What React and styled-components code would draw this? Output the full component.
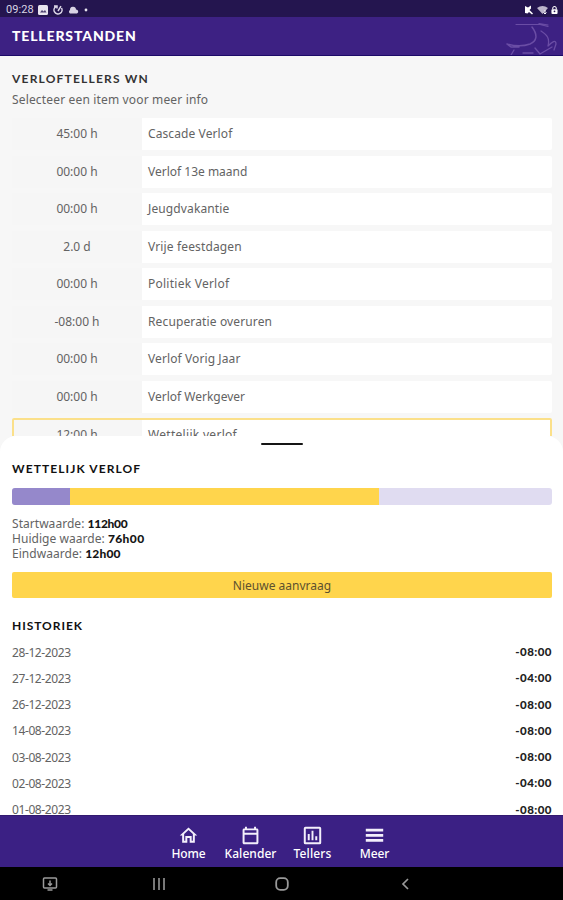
import React from "react";
import styled, { createGlobalStyle } from "styled-components";

const Global = createGlobalStyle`
  * { box-sizing: border-box; }
  body { margin: 0; background: #000; }
`;

const Screen = styled.div`
  width: 563px;
  height: 900px;
  display: flex;
  flex-direction: column;
  overflow: hidden;
  background: #f7f7f7;
  color: #636363;
  font-family: "Noto Sans", sans-serif;
  font-size: 12px;
  white-space: nowrap;
`;

const StatusBar = styled.div`
  flex: none;
  height: 17px;
  padding: 2px 5px 0 6px;
  display: flex;
  align-items: center;
  background: #24154f;
  color: #d9d5e4;
  font: 11px/15px Roboto, sans-serif;
`;

const Clock = styled.span`
  width: 32px;
  letter-spacing: 0.1px;
`;

const StatusIcons = styled.div`
  display: flex;
  align-items: center;
  gap: ${(p) => p.$gap}px;
  margin-left: ${(p) => (p.$end ? "auto" : "0")};
  svg { display: block; }
`;

const Header = styled.header`
  flex: none;
  height: 39px;
  padding-left: 12px;
  display: flex;
  justify-content: space-between;
  align-items: center;
  background: #3d2183;
  border-bottom: 1px solid #1c0a68;
`;

const PageTitle = styled.h1`
  margin: 0;
  color: #fff;
  font: 900 14px/20px Lato, sans-serif;
  letter-spacing: 0.85px;
`;

const Counters = styled.section`
  flex: none;
  height: 380px;
  padding: 14px 11px 0 12px;
  overflow: hidden;
`;

const Heading = styled.h2`
  margin: 0;
  color: ${(p) => (p.$soft ? "#333" : "#111")};
  font: 700 12px/18px Lato, sans-serif;
  letter-spacing: ${(p) => p.$spacing}px;
`;

const Hint = styled.p`
  margin: 3px 0 9px;
  line-height: 18px;
  letter-spacing: ${(p) => p.$spacing}px;
`;

const CounterList = styled.div`
  display: flex;
  flex-direction: column;
  gap: 5.5px;
`;

const CounterRow = styled.div`
  height: 32px;
  display: grid;
  grid-template-columns: 130px 1fr;
  line-height: 32px;
  background: #fff;
  border-radius: 2px;
  outline: ${(p) => (p.$selected ? "2px solid #fbe08a" : "none")};
  outline-offset: -2px;
  padding-top: ${(p) => (p.$selected ? "1px" : "0")};
`;

const Amount = styled.div`
  background: #f6f6f6;
  text-align: center;
  letter-spacing: 0;
`;

const CounterName = styled.div`
  padding-left: 6px;
  letter-spacing: ${(p) => p.$spacing}px;
`;

const Sheet = styled.section`
  flex: none;
  height: 379px;
  padding: 7px 11px 0 12px;
  overflow: hidden;
  background: #fff;
  border-radius: 16px 16px 0 0;
`;

const Handle = styled.div`
  width: 42px;
  height: 2px;
  margin: 0 auto 15px;
  background: #151515;
  border-radius: 1px;
`;

const Meter = styled.div`
  height: 17px;
  margin: 10px 0 11px;
  display: flex;
  overflow: hidden;
  border-radius: 3px;
  background: #e0dcf1;
`;

const MeterPart = styled.div`
  width: ${(p) => p.$size}px;
  background: ${(p) => p.$color};
`;

const Fact = styled.div`
  height: 15px;
  line-height: 15px;
  letter-spacing: ${(p) => p.$spacing}px;
`;

const Strong = styled.b`
  color: #151515;
  font: 900 12px/15px Lato, sans-serif;
  letter-spacing: ${(p) => p.$spacing}px;
`;

const RequestButton = styled.button`
  display: block;
  width: 100%;
  height: 26px;
  margin: 11px 0 19px;
  padding: 1px 0 0;
  border: 0;
  border-radius: 2px;
  background: #ffd54c;
  color: #5d512f;
  font: 12px/25px "Noto Sans", sans-serif;
  letter-spacing: 0;
`;

const History = styled.div`
  margin-top: 4px;
`;

const HistoryRow = styled.div`
  height: 26.25px;
  display: flex;
  justify-content: space-between;
  align-items: center;
  letter-spacing: -0.4px;
`;

const Hours = styled.b`
  color: #222;
  font: 900 11.5px/18px Lato, sans-serif;
  letter-spacing: 0.45px;
`;

const TabBar = styled.nav`
  flex: none;
  height: 52px;
  display: flex;
  justify-content: center;
  background: #3b2084;
  border-top: 1px solid #32196f;
`;

const Tab = styled.div`
  width: 62px;
  padding-top: 10px;
  display: flex;
  flex-direction: column;
  align-items: center;
  color: #fff;
  font: 500 12px/17px "Noto Sans", sans-serif;
  letter-spacing: ${(p) => p.$spacing}px;
  svg { display: block; flex: none; }
`;

const SystemBar = styled.footer`
  flex: none;
  height: 33px;
  padding-left: 42px;
  display: flex;
  align-items: center;
  background: #000;
  svg { display: block; }
`;

const SystemKey = styled.div`
  width: ${(p) => p.$width}px;
`;

const counters = [
  ["45:00 h", "Cascade Verlof", 0.1],
  ["00:00 h", "Verlof 13e maand", 0],
  ["00:00 h", "Jeugdvakantie", 0.12],
  ["2.0 d", "Vrije feestdagen", 0.14],
  ["00:00 h", "Politiek Verlof", 0.25],
  ["-08:00 h", "Recuperatie overuren", 0.13],
  ["00:00 h", "Verlof Vorig Jaar", 0.1],
  ["00:00 h", "Verlof Werkgever", 0],
  ["12:00 h", "Wettelijk verlof", 0.3],
];

const history = [
  ["28-12-2023", "-08:00"],
  ["27-12-2023", "-04:00"],
  ["26-12-2023", "-08:00"],
  ["14-08-2023", "-08:00"],
  ["03-08-2023", "-08:00"],
  ["02-08-2023", "-04:00"],
  ["01-08-2023", "-08:00"],
];

const tabs = [
  ["Home", "M12 2L1 12h3v9h6.500v-6h3v6H20v-9h3zM12 5l5.500 5v8.500H16V12.500H8v6H6.500V10z", -0.1],
  ["Kalender", "M20 3h-1V1h-2.500v2h-9V1H5v2H4c-1.100 0-2 .9-2 2v16c0 1.100.9 2 2 2h16c1.100 0 2-.9 2-2V5c0-1.100-.9-2-2-2zm-.5 17.500h-15V11h15zm0-12h-15v-3h15z", 0.05],
  ["Tellers", "M3 1h18a2 2 0 0 1 2 2v18a2 2 0 0 1-2 2H3a2 2 0 0 1-2-2V3a2 2 0 0 1 2-2zM3.500 3.500v17h17v-17zM6 10h2.500v8H6zM10.800 6h2.400v12h-2.400zM15.500 13H18v5h-2.500z", 0.1],
  ["Meer", "M1 3.500h22V7H1zM1 10h22v3.500H1zM1 16.500h22V20H1z", -0.1],
];

const Deer = () => (
  <svg width="58" height="38" viewBox="0 0 58 38" fill="none" stroke="#6a4da5" strokeWidth="1.500" strokeLinecap="round" strokeLinejoin="round">
    <path d="M11 7.500H35L43 9.500M34 6.500L43 8" strokeWidth="1.200" />
    <path d="M27 10C33 18 32 24 25 27C17 30 9 29 2 27M2 27L6 30L14 30" />
    <path d="M36 14C42 18 45 21 43 29C47 25 51 22 51 27L49 33M30 31L35 37L47 30M9 33L6 38M18 36H28" strokeWidth="1.300" />
  </svg>
);

export default function App() {
  return (
    <Screen>
      <Global />
      <StatusBar>
        <Clock>09:28</Clock>
        <StatusIcons $gap={5}>
          <svg width="10" height="10" viewBox="0 0 10 10">
            <rect width="10" height="10" rx="1.500" fill="#e8e5ef" />
            <path d="M2 7.500L4 5l1.500 1.500L7 5l1.500 2.500z" fill="#4d4072" />
          </svg>
          <svg width="10" height="10" viewBox="0 0 10 10" fill="none" stroke="#ddd8e8" strokeWidth="1.500">
            <path d="M3 1.500A4 4 0 1 0 8.500 3M1 1h3v2.500M5 6L8 1.200" />
          </svg>
          <svg width="11" height="8" viewBox="0 0 11 8">
            <path d="M2 7.500a2 2 0 0 1 0-3.500A3 3 0 0 1 8 3.500a2.100 2.100 0 0 1 1 4z" fill="#d8d3e4" />
          </svg>
          <svg width="4" height="4" viewBox="0 0 4 4"><circle cx="2" cy="2" r="1.400" fill="#e8e5ef" /></svg>
        </StatusIcons>
        <StatusIcons $gap={3} $end>
          <svg width="10" height="10" viewBox="0 0 10 10">
            <path d="M1 1l3 1.500L7 .5v3L5.500 5 9 8.500 8 9.500 5 7 3.500 8.500 1 8z" fill="#fff" />
          </svg>
          <svg width="11" height="10" viewBox="0 0 11 10">
            <path d="M0 3Q5.500-1 11 3L5.500 9z" fill="#bcb5cb" />
            <path d="M8 5v4M6.500 7.500L8 9l1.500-1.500" stroke="#fff" fill="none" />
          </svg>
          <svg width="7" height="10" viewBox="0 0 8 10">
            <path d="M2 4V3a2 2 0 0 1 4 0v1" fill="none" stroke="#fff" strokeWidth="1.200" />
            <rect x=".5" y="4" width="7" height="5.500" rx="1" fill="#fff" />
            <circle cx="4" cy="6.500" r="1" fill="#24154f" />
          </svg>
        </StatusIcons>
      </StatusBar>
      <Header>
        <PageTitle>TELLERSTANDEN</PageTitle>
        <Deer />
      </Header>
      <Counters>
        <Heading $soft $spacing={1.2}>VERLOFTELLERS WN</Heading>
        <Hint $spacing={0.16}>Selecteer een item voor meer info</Hint>
        <CounterList>
          {counters.map(([amount, name, spacing], i) => (
            <CounterRow key={name} $selected={i === 8}>
              <Amount>{amount}</Amount>
              <CounterName $spacing={spacing}>{name}</CounterName>
            </CounterRow>
          ))}
        </CounterList>
      </Counters>
      <Sheet>
        <Handle />
        <Heading $spacing={1.08}>WETTELIJK VERLOF</Heading>
        <Meter>
          <MeterPart $size={57.5} $color="#9588cb" />
          <MeterPart $size={309} $color="#ffd54c" />
        </Meter>
        <Fact $spacing={0.04}>Startwaarde: <Strong $spacing={-0.3}>112h00</Strong></Fact>
        <Fact $spacing={0.04}>Huidige waarde: <Strong $spacing={0.4}>76h00</Strong></Fact>
        <Fact $spacing={0.04}>Eindwaarde: <Strong $spacing={0.2}>12h00</Strong></Fact>
        <RequestButton>Nieuwe aanvraag</RequestButton>
        <Heading $spacing={0.95}>HISTORIEK</Heading>
        <History>
          {history.map(([date, hours]) => (
            <HistoryRow key={date}>
              <span>{date}</span>
              <Hours>{hours}</Hours>
            </HistoryRow>
          ))}
        </History>
      </Sheet>
      <TabBar>
        {tabs.map(([label, path, spacing]) => (
          <Tab key={label} $spacing={spacing}>
            <svg width="19" height="19" viewBox="0 0 24 24"><path d={path} fill="#f3effb" fillRule="evenodd" /></svg>
            {label}
          </Tab>
        ))}
      </TabBar>
      <SystemBar>
        <SystemKey $width={110}>
          <svg width="16" height="14" viewBox="0 0 16 14" fill="none" stroke="#9b9b9b" strokeWidth="1.500">
            <rect x="1.500" y="1" width="13" height="10" rx="1" />
            <path d="M5.500 13h5M8 3.500v4M6 6.500l2 2 2-2" />
          </svg>
        </SystemKey>
        <SystemKey $width={123}>
          <svg width="14" height="14" viewBox="0 0 14 14" stroke="#858585" strokeWidth="1.800"><path d="M2 1v12M7 1v12M12 1v12" /></svg>
        </SystemKey>
        <SystemKey $width={123}>
          <svg width="14" height="14" viewBox="0 0 14 14" fill="none" stroke="#999" strokeWidth="1.800"><rect x="1.200" y="1.200" width="11.600" height="11.600" rx="4" /></svg>
        </SystemKey>
        <SystemKey $width={14}>
          <svg width="14" height="14" viewBox="0 0 14 14" fill="none" stroke="#999" strokeWidth="1.700"><path d="M10 2L5 7l5 5" /></svg>
        </SystemKey>
      </SystemBar>
    </Screen>
  );
}
